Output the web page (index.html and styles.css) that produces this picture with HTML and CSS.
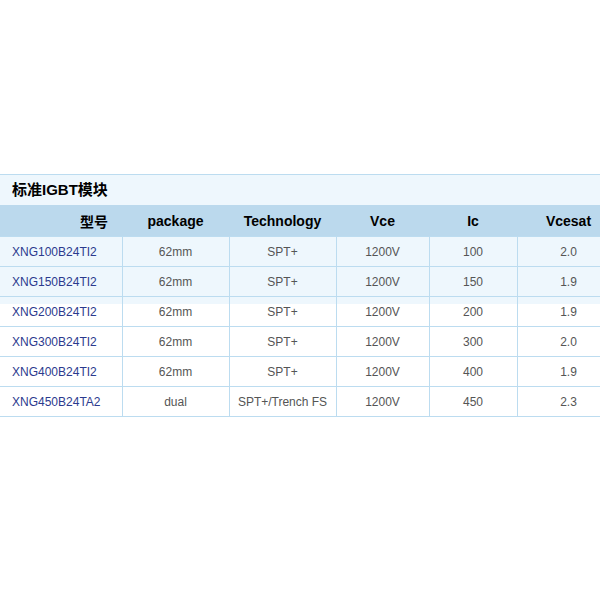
FILE: index.html
```html
<!DOCTYPE html>
<html lang="zh">
<head>
<meta charset="utf-8">
<title>标准IGBT模块</title>
<link rel="stylesheet" href="styles.css">
</head>
<body>
<div class="page">
  <div class="panel">
    <div class="title">标准IGBT模块</div>
    <table class="spec">
      <colgroup>
        <col class="c1"><col class="c2"><col class="c3"><col class="c4"><col class="c5"><col class="c6">
      </colgroup>
      <thead>
        <tr><th class="model-h">型号</th><th>package</th><th>Technology</th><th>Vce</th><th>Ic</th><th>Vcesat</th></tr>
      </thead>
      <tbody>
        <tr><td class="model">XNG100B24TI2</td><td>62mm</td><td>SPT+</td><td>1200V</td><td>100</td><td>2.0</td></tr>
        <tr><td class="model">XNG150B24TI2</td><td>62mm</td><td>SPT+</td><td>1200V</td><td>150</td><td>1.9</td></tr>
        <tr><td class="model">XNG200B24TI2</td><td>62mm</td><td>SPT+</td><td>1200V</td><td>200</td><td>1.9</td></tr>
        <tr><td class="model">XNG300B24TI2</td><td>62mm</td><td>SPT+</td><td>1200V</td><td>300</td><td>2.0</td></tr>
        <tr><td class="model">XNG400B24TI2</td><td>62mm</td><td>SPT+</td><td>1200V</td><td>400</td><td>1.9</td></tr>
        <tr><td class="model">XNG450B24TA2</td><td>dual</td><td>SPT+/Trench FS</td><td>1200V</td><td>450</td><td>2.3</td></tr>
      </tbody>
    </table>
  </div>
</div>
</body>
</html>
```
FILE: styles.css
```css
html, body {
  margin: 0;
  padding: 0;
  background: #fff;
}
.page {
  width: 600px;
  height: 600px;
  overflow: hidden;
  padding-top: 174px;
  box-sizing: border-box;
  font-family: "Liberation Sans", Arial, "Noto Sans CJK SC", sans-serif;
}
.panel {
  width: 620px;
  border-top: 1px solid #bcdcf0;
  background: linear-gradient(#eef7fd 0, #eef7fd 129px, #ffffff 129px);
}
.title {
  height: 30px;
  line-height: 30px;
  padding-left: 12px;
  font-size: 15px;
  font-weight: bold;
  color: #000;
}
.spec {
  width: 620px;
  table-layout: fixed;
  border-collapse: collapse;
}
.c1 { width: 122px; }
.c2 { width: 107px; }
.c3 { width: 107px; }
.c4 { width: 93px; }
.c5 { width: 88px; }
.c6 { width: 103px; }
.spec th {
  background: #bbd9ed;
  height: 31px;
  padding: 0;
  font-size: 14px;
  font-weight: bold;
  color: #000;
  text-align: center;
  border-bottom: 1px solid #bcdcf0;
}
.spec th.model-h {
  text-align: right;
  padding-right: 14px;
}
.spec td {
  height: 29px;
  padding: 0;
  font-size: 12px;
  color: #555;
  text-align: center;
  border: 1px solid #bcdcf0;
  border-top: none;
}
.spec td:first-child { border-left: none; }
.spec td.model {
  text-align: left;
  padding-left: 12px;
  color: #2b3a8e;
}
```
